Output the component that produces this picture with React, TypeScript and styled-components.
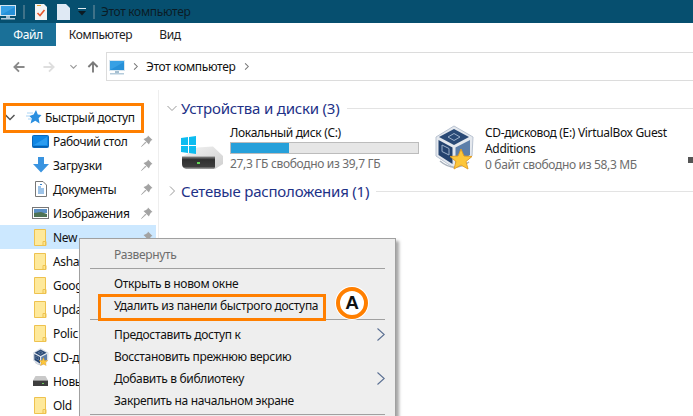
import React from 'react';
import styled, { createGlobalStyle } from 'styled-components';

const Global = createGlobalStyle`
  html, body { margin: 0; padding: 0; background: #fff; }
  #root { width: 693px; height: 416px; }
`;
const Page = styled.div`
  position: relative; width: 693px; height: 416px; overflow: hidden; background: #fff;
  display: flex; flex-direction: column; color: #000;
  font-family: "Noto Sans", "Open Sans", sans-serif; font-size: 12px; letter-spacing: -0.33px;
`;
const TitleBar = styled.div`
  height: 23px; flex: none; background: #064f6f; display: flex; align-items: center; color: #0b1c26;
`;
const TitleSep = styled.span<{ $ml: number }>`
  width: 2px; height: 14px; margin-left: ${p => p.$ml}px; background: #3f7288; flex: none;
`;
const IconSlot = styled.span<{ $ml: number; $w: number }>`
  display: flex; flex: none; margin-left: ${p => p.$ml}px; width: ${p => p.$w}px;
`;
const TitleText = styled.span`
  margin-left: 6px; line-height: 23px;
`;
const Tabs = styled.div`
  height: 23px; flex: none; display: flex; background: #fff;
`;
const Tab = styled.div<{ $active?: boolean; $w: number }>`
  width: ${p => p.$w}px; flex: none; display: flex; align-items: center; justify-content: center;
  color: ${p => (p.$active ? '#fff' : '#222')}; background: ${p => (p.$active ? '#1a7098' : '#fff')};
`;
const NavRow = styled.div`
  height: 44px; flex: none; display: flex; align-items: flex-start; padding-top: 6px; box-sizing: border-box;
`;
const NavIcons = styled.div`
  width: 106px; flex: none; height: 29px; display: flex; align-items: center;
`;
const Address = styled.div`
  flex: 1; height: 29px; box-sizing: border-box; border: 1px solid #dcdcdc; border-right: none;
  display: flex; align-items: center; padding-left: 2px;
`;
const Crumb = styled.span`
  margin: 0 8px 0 7px; color: #111; line-height: 27px;
`;
const Main = styled.div`
  flex: 1; display: flex; min-height: 0;
`;
const Side = styled.div`
  width: 158px; flex: none; border-right: 1px solid #eee; padding-top: 15px;
`;
const SideRow = styled.div<{ $selected?: boolean; $head?: boolean }>`
  height: 24px; display: flex; align-items: center; width: 156px;
  padding-left: ${p => (p.$head ? 5 : 32)}px; box-sizing: border-box;
  background: ${p => (p.$selected ? '#cce8ff' : 'transparent')};
`;
const SideLabel = styled.span<{ $ml: number }>`
  margin-left: ${p => p.$ml}px; color: #111; white-space: nowrap; flex: 1;
`;
const PinSlot = styled.span`
  display: flex; flex: none; margin-right: 3px;
`;
const IconBox = styled.span`
  width: 17px; flex: none; display: flex; justify-content: center; align-items: center;
`;
const Content = styled.div`
  flex: 1; padding: 8px 0 0 8px; min-width: 0;
`;
const GroupHead = styled.div`
  display: flex; align-items: center; height: 20px; font-size: 15px; color: #1e3287; letter-spacing: -0.2px;
`;
const GroupTitle = styled.span`
  margin-left: 4px; white-space: nowrap;
`;
const GroupLine = styled.span`
  flex: 1; height: 1px; background: #e3e3e3; margin-left: 7px;
`;
const Drives = styled.div`
  display: flex; height: 63px; padding-top: 7px; box-sizing: border-box; overflow: hidden;
`;
const Drive = styled.div<{ $w: number; $ml: number; $gap: number }>`
  width: ${p => p.$w}px; margin-left: ${p => p.$ml}px; flex: none; display: flex; gap: ${p => p.$gap}px;
`;
const DiskSlot = styled.span`
  padding-top: 11px; flex: none;
`;
const DriveInfo = styled.div`
  flex: 1; min-width: 0; line-height: 16px;
`;
const DriveName = styled.div`
  color: #111;
`;
const Bar = styled.div`
  height: 12px; background: #e6e6e6; border: 1px solid #bcbcbc; box-sizing: border-box; margin: 1px 0 2px;
  display: flex;
`;
const BarFill = styled.div`
  background: #26a0da;
`;
const DriveSub = styled.div`
  color: #6d6d6d;
`;
const Menu = styled.div`
  position: absolute; left: 79px; top: 238px; width: 317px; height: 190px; box-sizing: border-box;
  background: #eeeeee; border: 1px solid #a0a0a0; box-shadow: 3px 3px 3px rgba(0,0,0,.35); padding-top: 4px;
`;
const MenuItem = styled.div<{ $disabled?: boolean }>`
  height: 22px; display: flex; align-items: center; justify-content: space-between;
  padding: 0 10px 0 34px; color: ${p => (p.$disabled ? '#6d6d6d' : '#111')};
`;
const MenuSep = styled.div`
  height: 1px; background: #a0a0a0; margin: 3px 10px;
`;
const Highlight = styled.div<{ $l: number; $t: number; $w: number; $h: number }>`
  position: absolute; left: ${p => p.$l}px; top: ${p => p.$t}px; width: ${p => p.$w}px; height: ${p => p.$h}px;
  box-sizing: border-box; border: 3px solid #ff7f00;
`;
const Badge = styled.div`
  position: absolute; left: 336px; top: 287px; width: 32px; height: 32px; box-sizing: border-box;
  border-radius: 50%; border: 4px solid #ff7f00; background: #fff; box-shadow: 0 0 0 1px #fff;
  display: flex; align-items: center; justify-content: center;
  font: bold 19px "Liberation Sans", Arial, sans-serif; color: #111; letter-spacing: 0;
`;
const Sliver = styled.div`
  position: absolute; left: 688px; top: 157px; width: 5px; height: 6px; background: #555;
`;
const NavGap = styled.span<{ $w: number }>`
  width: ${p => p.$w}px; flex: none;
`;

const Computer = () => (
  <svg width="16" height="16" viewBox="0 0 16 16">
    <rect x="0" y="1" width="16" height="11" fill="#d7e6f0" />
    <rect x="1" y="2" width="14" height="9" fill="#37a0e4" />
    <path d="M1 11 L15 3 V11Z" fill="#2690d8" />
    <rect x="6" y="12" width="4" height="2" fill="#a6bfd0" />
    <rect x="1" y="14" width="14" height="1.5" fill="#b4cbdb" />
  </svg>
);
const Folder = () => (
  <svg width="13" height="17" viewBox="0 0 13 17">
    <path d="M.5.5H11.5V16.5H.5Z" fill="#fde68f" stroke="#eec24f" />
    <path d="M1 1H11V12L8.5 16H1Z" fill="#fee99b" />
    <path d="M9 12.5h3V16.5H9Z" fill="none" stroke="#eec24f" />
  </svg>
);
const Pin = () => (
  <svg width="12" height="12" viewBox="0 0 12 12">
    <path d="M7 0.5 L11.5 5 L10 5.5 L8.5 8 L8 9.5 L2.5 4 L4 3.5 L6.5 2 Z" fill="#a3a3a3" />
    <path d="M4.5 7 L0.5 11.5 L5 7.5Z" fill="#a3a3a3" stroke="#a3a3a3" strokeWidth=".7" />
  </svg>
);
const Star = () => (
  <svg width="16" height="16" viewBox="0 0 16 16">
    <path d="M10 1 L11.8 5.6 L15.5 6 L12.6 9.3 L13.6 14.5 L9.3 11.8 L4.6 14.5 L5.8 9.4 L3.4 7 L7.6 5.6Z" fill="#2a8fe0" />
    <path d="M1 4h6M0 7h4M2 10h3" stroke="#a9d4f5" strokeWidth="1" />
  </svg>
);
const Chev = ({ dir, c = '#a6a6a6', s = 10, w = 1 }: { dir: 'r' | 'd'; c?: string; s?: number; w?: number }) => (
  <svg width={s} height={s} viewBox="0 0 10 10" style={{ flex: 'none' }}>
    <path d={dir === 'r' ? 'M3 .5 L7.5 5 L3 9.5' : 'M.5 3 L5 7.5 L9.5 3'} fill="none" stroke={c} strokeWidth={w} />
  </svg>
);
const SubArrow = () => (
  <svg width="8" height="13" viewBox="0 0 8 13" style={{ flex: 'none' }}>
    <path d="M.5 .5 L7.2 6.5 L.5 12.5" fill="none" stroke="#5a6f92" strokeWidth="1.1" />
  </svg>
);
const CubeIcon = ({ s = 40 }: { s?: number }) => (
  <svg width={s} height={s * 1.15} viewBox="0 0 40 46">
    <path d="M19 1 L38 12 L37 31 L19 43 L1 31 L1 12Z" fill="#e4e8ee" stroke="#b9c3d1" />
    <path d="M19 4 L34 12 L19 20 L4 12Z" fill="#2a4a76" />
    <path d="M3.5 15 L17.5 22.5 V39 L3.5 30Z" fill="#24436f" />
    <path d="M20.5 22.5 L35 15 V30 L20.5 39Z" fill="#5c7ea9" />
    <path d="M13 12 L19 8.5 L25 12 L19 15.5Z M7 20 L14 23.5 V30 L7 26.5Z" fill="none" stroke="#9db1cb" />
    <path d="M5 36 Q19 48 34 37" fill="none" stroke="#a9b2bd" strokeWidth="1.5" />
    <path d="M26 24 L29 31 L37 31.5 L31 36.5 L33 44 L26 40 L19 44 L21 36.5 L15 31.5 L23 31Z" fill="#fcc63a" stroke="#e09a20" strokeWidth=".9" />
  </svg>
);
const DiskIcon = () => (
  <svg width="44" height="33" viewBox="0 0 44 33">
    <defs>
      <linearGradient id="dTop" x1="0" y1="0" x2="1" y2="1">
        <stop offset="0" stopColor="#f3f3f3" />
        <stop offset="1" stopColor="#cfcfcf" />
      </linearGradient>
      <linearGradient id="dFront" x1="0" y1="0" x2="0" y2="1">
        <stop offset="0" stopColor="#8a8a8a" />
        <stop offset=".25" stopColor="#2f2f2f" />
        <stop offset=".8" stopColor="#3d3d3d" />
        <stop offset="1" stopColor="#a8a8a8" />
      </linearGradient>
    </defs>
    <path d="M17 11.5 L33 10.5 L43 20 V28 L35 33 H10 L2 21Z" fill="url(#dTop)" />
    <path d="M2 20.5 H35 V31.5 L34 33 H6 Q2 32 2 28Z" fill="url(#dFront)" />
    <rect x="17" y="26" width="3" height="2" fill="#63d656" />
    <path d="M1 2 L8 1 V9 H1Z M9 1 L16 0 V9 H9Z M1 10 H8 V17 L1 16Z M9 10 H16 V18 L9 17Z" fill="#0dbcf0" />
  </svg>
);
const SmallDisk = () => (
  <svg width="15" height="12" viewBox="0 0 15 12">
    <path d="M2.5 1 H12.5 L15 5.5 H0Z" fill="#c9c9c9" />
    <rect x="0" y="5.5" width="15" height="5.5" fill="#3e3e3e" />
    <rect x="9" y="8" width="2" height="1" fill="#6fd05e" />
  </svg>
);
const Download = () => (
  <svg width="16" height="16" viewBox="0 0 16 16">
    <path d="M5 0 H11 V7 H16 L8 15.5 L0 7 H5Z" fill="#3a94e0" />
  </svg>
);
const Desktop = () => (
  <svg width="17" height="13" viewBox="0 0 17 13">
    <rect x="0.5" y="0.5" width="16" height="12" rx="1" fill="#0f86e4" stroke="#0a68bd" />
    <path d="M2 10 L15 2 V10Z" fill="#2b9cf0" />
    <path d="M1 11.5H16" stroke="#065fae" />
  </svg>
);
const DocIcon = () => (
  <svg width="12" height="16" viewBox="0 0 12 16">
    <path d="M.5.5H8L11.5 4V15.5H.5Z" fill="#fff" stroke="#777" />
    <path d="M3 6h3M3 8h6M3 10h6M3 12h6M5 3.5h2" stroke="#3a86d0" />
  </svg>
);
const PicIcon = () => (
  <svg width="17" height="12" viewBox="0 0 17 12">
    <rect x=".5" y=".5" width="16" height="11" fill="#fff" stroke="#777" />
    <rect x="2" y="2" width="13" height="4" fill="#5b8fc4" />
    <path d="M2 6 L9 5 L15 7 V10 H2Z" fill="#4f7355" />
  </svg>
);
const TaskIcon = () => (
  <svg width="12" height="16" viewBox="0 0 12 16">
    <path d="M0 0H9L12 3V16H0Z" fill="#f4f4f4" />
    <path d="M2.5 9 L5 11.5 L9.5 6" fill="none" stroke="#e8572c" strokeWidth="1.6" />
    <path d="M2 1.5h4" stroke="#e8a02c" />
  </svg>
);
const BlankIcon = () => (
  <svg width="13" height="16" viewBox="0 0 13 16">
    <path d="M0 0H9L13 4V16H0Z" fill="#dfe9f4" />
  </svg>
);
const QuickDrop = () => (
  <svg width="8" height="8" viewBox="0 0 8 8">
    <path d="M0 .5H8" stroke="#dfe9ee" />
    <path d="M0 3H8L4 7.5Z" fill="#0c1a22" />
  </svg>
);
const Arrow = ({ c, dir }: { c: string; dir: 'l' | 'r' | 'u' }) => {
  const rot = dir === 'l' ? 0 : dir === 'r' ? 180 : 90;
  return (
    <svg width="12" height="12" viewBox="0 0 13 13" style={{ transform: `rotate(${rot}deg)`, flex: 'none' }}>
      <path d="M1.5 6.5 H12.5 M6.5 1.5 L1.5 6.5 L6.5 11.5" fill="none" stroke={c} strokeWidth="2" />
    </svg>
  );
};

const rows = [
  { icon: <Desktop />, label: 'Рабочий стол', pin: true },
  { icon: <Download />, label: 'Загрузки', pin: true },
  { icon: <DocIcon />, label: 'Документы', pin: true },
  { icon: <PicIcon />, label: 'Изображения', pin: true },
  { icon: <Folder />, label: 'New', pin: true, sel: true },
  { icon: <Folder />, label: 'Asha' },
  { icon: <Folder />, label: 'Goog' },
  { icon: <Folder />, label: 'Upda' },
  { icon: <Folder />, label: 'Polic' },
  { icon: <CubeIcon s={16} />, label: 'CD-д' },
  { icon: <SmallDisk />, label: 'Новы' },
  { icon: <Folder />, label: 'Old' },
];

export default function App() {
  return (
    <Page>
      <Global />
      <TitleBar>
        <IconSlot $ml={0} $w={16}><Computer /></IconSlot>
        <TitleSep $ml={7} />
        <IconSlot $ml={10} $w={12}><TaskIcon /></IconSlot>
        <IconSlot $ml={10} $w={13}><BlankIcon /></IconSlot>
        <IconSlot $ml={8} $w={8}><QuickDrop /></IconSlot>
        <TitleSep $ml={7} />
        <TitleText>Этот компьютер</TitleText>
      </TitleBar>
      <Tabs>
        <Tab $active $w={56}>Файл</Tab>
        <Tab $w={89}>Компьютер</Tab>
        <Tab $w={50}>Вид</Tab>
      </Tabs>
      <NavRow>
        <NavIcons>
          <NavGap $w={13} />
          <Arrow c="#8a8a8a" dir="l" />
          <NavGap $w={18} />
          <Arrow c="#dedede" dir="r" />
          <NavGap $w={15} />
          <Chev dir="d" c="#9a9a9a" s={7} w={1.6} />
          <NavGap $w={10} />
          <Arrow c="#7a7a7a" dir="u" />
        </NavIcons>
        <Address>
          <Computer />
          <NavGap $w={7} />
          <Chev dir="r" c="#777" s={7} w={1.5} />
          <Crumb>Этот компьютер</Crumb>
          <Chev dir="r" c="#777" s={7} w={1.5} />
        </Address>
      </NavRow>
      <Main>
        <Side>
          <SideRow $head>
            <Chev dir="d" c="#555" s={10} w={1.5} />
            <NavGap $w={11} />
            <Star />
            <SideLabel $ml={3}>Быстрый доступ</SideLabel>
          </SideRow>
          {rows.map(r => (
            <SideRow key={r.label} $selected={r.sel}>
              <IconBox>{r.icon}</IconBox>
              <SideLabel $ml={4}>{r.label}</SideLabel>
              {r.pin && <PinSlot><Pin /></PinSlot>}
            </SideRow>
          ))}
        </Side>
        <Content>
          <GroupHead>
            <Chev dir="d" c="#9a9a9a" />
            <GroupTitle>Устройства и диски (3)</GroupTitle>
            <GroupLine />
          </GroupHead>
          <Drives>
            <Drive $w={239} $ml={13} $gap={6}>
              <DiskSlot><DiskIcon /></DiskSlot>
              <DriveInfo>
                <DriveName>Локальный диск (C:)</DriveName>
                <Bar><BarFill style={{ width: '31%' }} /></Bar>
                <DriveSub>27,3 ГБ свободно из 39,7 ГБ</DriveSub>
              </DriveInfo>
            </Drive>
            <Drive $w={245} $ml={16} $gap={10}>
              <CubeIcon />
              <DriveInfo>
                <DriveName>CD-дисковод (E:) VirtualBox Guest Additions</DriveName>
                <DriveSub>0 байт свободно из 58,3 МБ</DriveSub>
              </DriveInfo>
            </Drive>
          </Drives>
          <GroupHead>
            <Chev dir="r" c="#9a9a9a" />
            <GroupTitle>Сетевые расположения (1)</GroupTitle>
            <GroupLine />
          </GroupHead>
        </Content>
      </Main>
      <Sliver />
      <Menu>
        <MenuItem $disabled>Развернуть</MenuItem>
        <MenuSep />
        <MenuItem>Открыть в новом окне</MenuItem>
        <MenuItem>Удалить из панели быстрого доступа</MenuItem>
        <MenuSep />
        <MenuItem>Предоставить доступ к <SubArrow /></MenuItem>
        <MenuItem>Восстановить прежнюю версию</MenuItem>
        <MenuItem>Добавить в библиотеку <SubArrow /></MenuItem>
        <MenuItem>Закрепить на начальном экране</MenuItem>
        <MenuSep />
      </Menu>
      <Highlight $l={3} $t={103} $w={141} $h={30} />
      <Highlight $l={98} $t={294} $w={228} $h={27} />
      <Badge>A</Badge>
    </Page>
  );
}
